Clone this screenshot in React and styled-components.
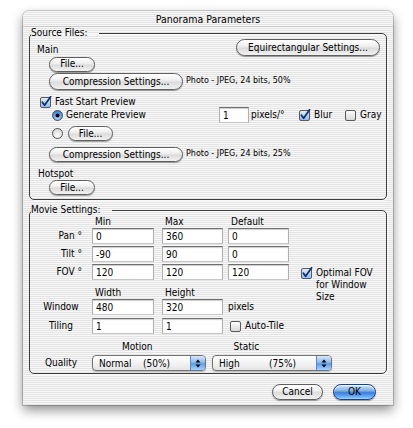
import React from 'react';
import styled, {createGlobalStyle} from 'styled-components';

const GlobalStyle = createGlobalStyle`
  html, body {
    margin: 0;
    padding: 0;
    background: #ffffff;
  }
  body {
    font-family: 'DejaVu Sans Condensed', 'DejaVu Sans', sans-serif;
    font-size: 10px;
    color: #000;
  }
`;

const uiFont = `'DejaVu Sans Condensed', 'DejaVu Sans', sans-serif`;

const pinstripe = 'repeating-linear-gradient(to bottom, #f8f8f8 0px, #f8f8f8 1px, #e4e4e4 1px, #e4e4e4 2px)';

const Page = styled.div`
  width: 413px;
  height: 428px;
  padding: 11px 0 0 23px;
  box-sizing: border-box;
`;

const Window = styled.div`
  width: 370px;
  height: 394px;
  box-sizing: border-box;
  background: ${pinstripe};
  border-radius: 6px 6px 0 0;
  box-shadow: 0 5px 12px rgba(0, 0, 0, 0.45), 0 0 0 1px rgba(0, 0, 0, 0.18);
  display: flex;
  flex-direction: column;
`;

const TitleBar = styled.div`
  height: 16px;
  line-height: 17px;
  text-align: center;
  font-size: 10.5px;
  border-bottom: 1px solid rgba(0, 0, 0, 0.12);
  box-sizing: border-box;
`;

const Body = styled.div`
  padding: 0 6px 6px;
  display: flex;
  flex-direction: column;
`;

const Group = styled.fieldset`
  margin: ${p => p.$mt || 0}px 0 0;
  padding: 0 0 ${p => p.$pb || 0}px;
  border: 1px solid #3c3c3c;
  border-radius: 5px;
  min-width: 0;
  box-shadow: inset 0 1px 0 rgba(255, 255, 255, 0.7), 1px 1px 0 rgba(255, 255, 255, 0.7);
`;

const Legend = styled.legend`
  margin-left: 1px;
  padding: 0 12px 0 0;
  line-height: 12px;
`;

const Row = styled.div`
  display: flex;
  align-items: ${p => p.$align || 'center'};
  height: ${p => p.$h}px;
  margin-top: ${p => p.$mt || 0}px;
  padding-left: ${p => p.$pl || 0}px;
  padding-right: ${p => p.$pr || 0}px;
  justify-content: ${p => p.$justify || 'flex-start'};
`;

const Label = styled.span`
  line-height: 12px;
  white-space: nowrap;
  width: ${p => (p.$w ? `${p.$w}px` : 'auto')};
  margin-left: ${p => p.$ml || 0}px;
  text-align: ${p => (p.$center ? 'center' : 'left')};
  flex-shrink: 0;
`;

const Caption = styled.span`
  font-family: 'DejaVu Sans', sans-serif;
  font-size: 8px;
  margin-left: 3px;
  margin-top: -3px;
  white-space: nowrap;
`;

const PillButton = styled.button`
  width: ${p => p.$w}px;
  height: ${p => p.$h || 16}px;
  margin-left: ${p => p.$ml || 0}px;
  padding: 0;
  flex-shrink: 0;
  border-radius: 9px;
  border: 1px solid #5e5e5e;
  background: linear-gradient(to bottom, #ffffff 0%, #f0f0f0 40%, #dcdcdc 55%, #f2f2f2 100%);
  box-shadow: 0 1px 1px rgba(0, 0, 0, 0.35), inset 0 1px 1px #fff;
  font-family: ${uiFont};
  font-size: 10px;
  color: #000;
  line-height: 1;
`;

const DefaultButton = styled(PillButton)`
  border-color: #1d3f7a;
  background: linear-gradient(to bottom, #cfe3fb 0%, #7fb2ee 40%, #3a7ddb 55%, #6fb0f4 85%, #a8d4fb 100%);
`;

const CheckWrap = styled.label`
  display: flex;
  align-items: ${p => (p.$top ? 'flex-start' : 'center')};
  margin-left: ${p => p.$ml || 0}px;
  width: ${p => (p.$w ? `${p.$w}px` : 'auto')};
  align-self: ${p => (p.$start ? 'start' : 'auto')};
  height: ${p => (p.$start ? '16px' : 'auto')};
  flex-shrink: 0;
  gap: 3px;
  white-space: nowrap;
  line-height: 12px;
  svg {
    flex-shrink: 0;
  }
`;

const Field = styled.input`
  width: ${p => p.$w}px;
  height: 16px;
  box-sizing: border-box;
  margin: 0 0 0 ${p => p.$ml || 0}px;
  padding: 0 3px;
  border: 1px solid;
  border-color: #6f6f6f #b0b0b0 #c6c6c6 #b0b0b0;
  box-shadow: inset 0 1px 1px rgba(0, 0, 0, 0.2);
  background: #fff;
  font-family: ${uiFont};
  font-size: 10px;
  color: #000;
  outline: none;
  align-self: start;
`;

const MovieGrid = styled.div`
  display: grid;
  grid-template-columns: 62px 70px 66px 61px 1fr;
  grid-template-rows: 12px 18px 18px 20px 15px 19px 16px;
`;

const RowLabel = styled.div`
  line-height: 16px;
  height: 16px;
  text-align: ${p => p.$align || 'right'};
  padding-right: ${p => (p.$align ? 0 : 10)}px;
  white-space: nowrap;
`;

const ColHead = styled.div`
  padding-left: 3px;
  line-height: 12px;
  align-self: end;
`;

const SideCheck = styled.div`
  grid-row: span 3;
  padding: 3px 0 0 12px;
`;

const Popup = styled.div`
  width: ${p => p.$w}px;
  height: 16px;
  margin-left: ${p => p.$ml || 0}px;
  box-sizing: border-box;
  display: flex;
  align-items: center;
  border: 1px solid #747474;
  border-radius: 4px;
  background: linear-gradient(to bottom, #ffffff 0%, #f3f3f3 50%, #e4e4e4 100%);
  box-shadow: 0 1px 1px rgba(0, 0, 0, 0.25);
  overflow: hidden;
  flex-shrink: 0;
`;

const PopupText = styled.span`
  width: ${p => (p.$w ? `${p.$w}px` : 'auto')};
  padding-left: ${p => p.$pl || 0}px;
  white-space: nowrap;
`;

const PopupCap = styled.div`
  margin-left: auto;
  width: 14px;
  height: 100%;
  border-left: 1px solid #5d87c4;
  background: linear-gradient(to bottom, #d5e8fc 0%, #8dbcf1 45%, #5b9be6 55%, #a9d2fa 100%);
  display: flex;
  align-items: center;
  justify-content: center;
`;

const Checkbox = ({checked}) => (
  <svg width="12" height="12" viewBox="0 0 12 12">
    <defs>
      <linearGradient id={checked ? 'cbOn' : 'cbOff'} x1="0" y1="0" x2="0" y2="1">
        <stop offset="0" stopColor={checked ? '#e4f0fd' : '#ffffff'} />
        <stop offset="1" stopColor={checked ? '#8cb9ef' : '#d6d6d6'} />
      </linearGradient>
    </defs>
    <rect x="0.5" y="1.5" width="10" height="10" rx="1.5" fill={`url(#${checked ? 'cbOn' : 'cbOff'})`} stroke="#5a5a5a" />
    {checked && <path d="M2.4 6.2 L4.6 9.2 L10.6 0.8" fill="none" stroke="#0d2a73" strokeWidth="1.7" strokeLinecap="round" strokeLinejoin="round" />}
  </svg>
);

const Radio = ({selected}) => (
  <svg width="11" height="11" viewBox="0 0 11 11">
    <defs>
      <radialGradient id={selected ? 'rOn' : 'rOff'} cx="0.5" cy="0.7" r="0.6">
        <stop offset="0" stopColor={selected ? '#bcdcfc' : '#ffffff'} />
        <stop offset="1" stopColor={selected ? '#3d7fdc' : '#d8d8d8'} />
      </radialGradient>
    </defs>
    <circle cx="5.5" cy="5.5" r="5" fill={`url(#${selected ? 'rOn' : 'rOff'})`} stroke="#555" />
    {selected && <circle cx="5.5" cy="5.5" r="2" fill="#000" />}
  </svg>
);

const Arrows = () => (
  <svg width="6" height="9" viewBox="0 0 6 9">
    <path d="M3 0.5 L5.5 3.5 L0.5 3.5 Z M3 8.5 L5.5 5.5 L0.5 5.5 Z" fill="#000" />
  </svg>
);

export default function App() {
  return (
    <Page>
      <GlobalStyle />
      <Window>
        <TitleBar>Panorama Parameters</TitleBar>
        <Body>
          <Group $pb={4}>
            <Legend>Source Files:</Legend>
            <Row $h={17} $pl={7} $pr={6} $align="flex-end" $justify="space-between">
              <Label>Main</Label>
              <PillButton $w={144} $h={17}>Equirectangular Settings...</PillButton>
            </Row>
            <Row $h={16} $pl={19}>
              <PillButton $w={46} $h={15}>File...</PillButton>
            </Row>
            <Row $h={17} $mt={1} $pl={19}>
              <PillButton $w={134} $h={17}>Compression Settings...</PillButton>
              <Caption>Photo - JPEG, 24 bits, 50%</Caption>
            </Row>
            <Row $h={10} $mt={7} $pl={10}>
              <CheckWrap>
                <Checkbox checked />
                Fast Start Preview
              </CheckWrap>
            </Row>
            <Row $h={16} $pl={22}>
              <CheckWrap $w={167}>
                <Radio selected />
                Generate Preview
              </CheckWrap>
              <Field $w={30} defaultValue="1" readOnly />
              <Label $w={48} $ml={2}>pixels/°</Label>
              <CheckWrap $w={46}>
                <Checkbox checked />
                Blur
              </CheckWrap>
              <CheckWrap>
                <Checkbox />
                Gray
              </CheckWrap>
            </Row>
            <Row $h={15} $mt={3} $pl={22}>
              <Radio />
              <PillButton $w={45} $h={15} $ml={5}>File...</PillButton>
            </Row>
            <Row $h={15} $mt={6} $pl={19}>
              <PillButton $w={134} $h={15}>Compression Settings...</PillButton>
              <Caption>Photo - JPEG, 24 bits, 25%</Caption>
            </Row>
            <Row $h={12} $mt={6} $pl={8}>
              <Label>Hotspot</Label>
            </Row>
            <Row $h={15} $pl={19}>
              <PillButton $w={46} $h={15}>File...</PillButton>
            </Row>
          </Group>

          <Group $mt={4} $pb={2}>
            <Legend>Movie Settings:</Legend>
            <MovieGrid>
              <div />
              <ColHead>Min</ColHead>
              <ColHead>Max</ColHead>
              <ColHead>Default</ColHead>
              <div />

              <RowLabel>Pan °</RowLabel>
              <Field $w={62} defaultValue="0" readOnly />
              <Field $w={61} defaultValue="360" readOnly />
              <Field $w={61} defaultValue="0" readOnly />
              <div />

              <RowLabel>Tilt °</RowLabel>
              <Field $w={62} defaultValue="-90" readOnly />
              <Field $w={61} defaultValue="90" readOnly />
              <Field $w={61} defaultValue="0" readOnly />
              <div />

              <RowLabel>FOV °</RowLabel>
              <Field $w={62} defaultValue="120" readOnly />
              <Field $w={61} defaultValue="120" readOnly />
              <Field $w={61} defaultValue="120" readOnly />
              <SideCheck>
                <CheckWrap $top>
                  <Checkbox checked />
                  <span>
                    Optimal FOV
                    <br />
                    for Window
                    <br />
                    Size
                  </span>
                </CheckWrap>
              </SideCheck>

              <div />
              <ColHead>Width</ColHead>
              <ColHead>Height</ColHead>
              <div />

              <RowLabel $align="center">Window</RowLabel>
              <Field $w={62} defaultValue="480" readOnly />
              <Field $w={61} defaultValue="320" readOnly />
              <RowLabel $align="left">pixels</RowLabel>

              <RowLabel $align="center">Tiling</RowLabel>
              <Field $w={62} defaultValue="1" readOnly />
              <Field $w={61} defaultValue="1" readOnly />
              <CheckWrap $ml={2} $start>
                <Checkbox />
                Auto-Tile
              </CheckWrap>
              <div />
            </MovieGrid>
            <Row $h={12} $mt={7}>
              <Label $ml={92}>Motion</Label>
              <Label $ml={81}>Static</Label>
            </Row>
            <Row $h={16} $mt={2}>
              <Label $w={62} $center>Quality</Label>
              <Popup $w={114}>
                <PopupText $w={44} $pl={6}>Normal</PopupText>
                <PopupText>(50%)</PopupText>
                <PopupCap>
                  <Arrows />
                </PopupCap>
              </Popup>
              <Popup $w={120} $ml={6}>
                <PopupText $w={50} $pl={6}>High</PopupText>
                <PopupText>(75%)</PopupText>
                <PopupCap>
                  <Arrows />
                </PopupCap>
              </Popup>
            </Row>
          </Group>

          <Row $h={16} $mt={10} $justify="flex-end" $pr={11}>
            <PillButton $w={51}>Cancel</PillButton>
            <DefaultButton $w={43} $ml={10}>OK</DefaultButton>
          </Row>
        </Body>
      </Window>
    </Page>
  );
}
